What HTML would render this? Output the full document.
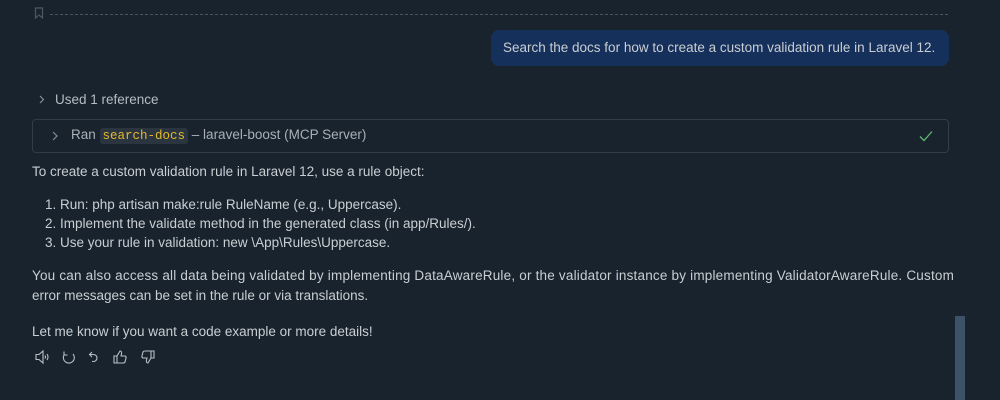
<!DOCTYPE html>
<html><head><meta charset="utf-8"><style>
*{margin:0;padding:0;box-sizing:border-box}
body{width:1000px;height:400px;background:#18232d;font-family:"Liberation Sans",sans-serif;font-size:13.5px;color:#c9ced3;position:relative;overflow:hidden}
.a{position:absolute;white-space:nowrap}
.dash{position:absolute;left:50px;right:52px;top:14px;border-top:1px dashed #4a5560}
.bubble{position:absolute;left:491px;top:30px;width:458px;height:36px;background:#15305a;border-radius:8px;color:#c9ced3;line-height:36px;padding-left:12px}
.box{position:absolute;left:32px;top:119px;width:917px;height:34px;border:1px solid #313d48;border-radius:4px}
code{font-family:"Liberation Mono",monospace;color:#e5b82a;background:#2a3540;border-radius:3px;padding:1px 3px;font-size:12.5px}
.sb{position:absolute;left:955px;top:316px;width:10px;height:84px;background:#3c5268}
</style></head><body>
<svg class="a" style="left:34px;top:7px" width="10" height="12" viewBox="0 0 10 12"><path d="M1.5 1h7v10L5 8 1.5 11z" fill="none" stroke="#4d5862" stroke-width="1.2"/></svg>
<div class="dash"></div>
<div class="bubble">Search the docs for how to create a custom validation rule in Laravel 12.</div>
<svg class="a" style="left:39px;top:95px" width="6" height="9" viewBox="0 0 6 9"><path d="M1 1l3.5 3.5L1 8" fill="none" stroke="#8a939b" stroke-width="1.1"/></svg>
<div class="a" style="left:55px;top:92px;color:#b5bcc2">Used 1 reference</div>
<div class="box"></div>
<svg class="a" style="left:52px;top:131px" width="7" height="10" viewBox="0 0 7 10"><path d="M1 1l4 4-4 4" fill="none" stroke="#8a939b" stroke-width="1.1"/></svg>
<div class="a" style="left:71px;top:127px;color:#a9b0b7">Ran <code>search-docs</code> – laravel-boost (MCP Server)</div>
<svg class="a" style="left:919px;top:130px" width="14" height="12" viewBox="0 0 14 12"><path d="M1 6.5l4 4L13 1.5" fill="none" stroke="#5fb86b" stroke-width="1.3"/></svg>
<div class="a" style="left:32px;top:164px">To create a custom validation rule in Laravel 12, use a rule object:</div>
<div class="a" style="left:45px;top:197px">1. Run: php artisan make:rule RuleName (e.g., Uppercase).</div>
<div class="a" style="left:45px;top:216px">2. Implement the validate method in the generated class (in app/Rules/).</div>
<div class="a" style="left:45px;top:235px">3. Use your rule in validation: new \App\Rules\Uppercase.</div>
<div class="a" style="left:32px;top:268px;letter-spacing:0.2px">You can also access all data being validated by implementing DataAwareRule, or the validator instance by implementing ValidatorAwareRule. Custom</div>
<div class="a" style="left:32px;top:288px">error messages can be set in the rule or via translations.</div>
<div class="a" style="left:32px;top:324px">Let me know if you want a code example or more details!</div>
<svg class="a" style="left:34px;top:349px" width="125" height="16" viewBox="0 0 125 16" fill="none" stroke="#b8bfc5" stroke-width="1.1">
<path d="M2 5.5h3l4-3.5v12l-4-3.5H2z"/><path d="M11 6.5q1 1.5 0 3M13 5q2 3 0 6"/>
<path d="M39 5A5.5 5.5 0 1 1 30 6M30 2.5v3.5h3.5"/>
<path d="M58 3l-2.5 2.5 2.5 2.5M55.5 5.5h4a3.5 3.5 0 0 1 0 7H58"/>
<path d="M80 7h3v7h-3zM83 7l3-5q2 0 1.5 3L87 7h4q1.5 0.5 1 2l-1 4q-0.5 1-2 1h-6"/>
<path d="M117 9h3V2h-3zM117 9l-3 5q-2 0-1.5-3L113 9h-4q-1.5-0.5-1-2l1-4q0.5-1 2-1h6"/>
</svg>
<div class="sb"></div>
</body></html>
